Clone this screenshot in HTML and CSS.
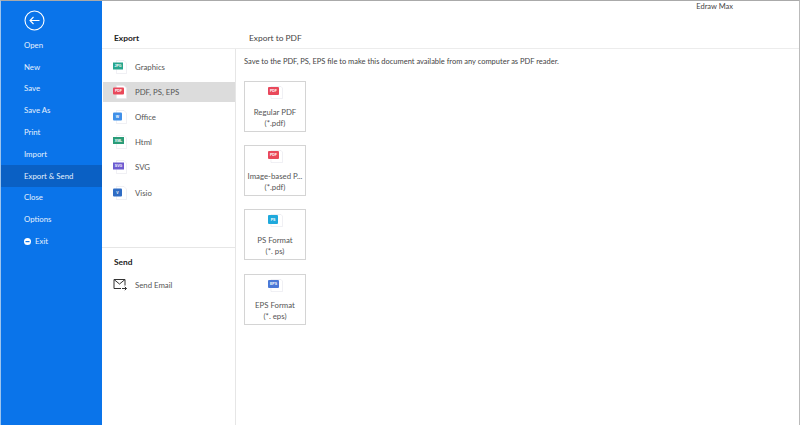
FILE: index.html
```html
<!DOCTYPE html>
<html lang="en">
<head>
<meta charset="utf-8">
<title>Export to PDF</title>
<link rel="stylesheet" href="styles.css">
</head>
<body>
<div class="app">
  <nav class="side">
    <svg class="back" width="21" height="21" viewBox="0 0 21 21"><circle cx="10.5" cy="10.5" r="9.5" fill="none" stroke="#fff" stroke-width="1.1"/><path d="M15.5 10.5H6M9.5 7L6 10.5L9.5 14" fill="none" stroke="#fff" stroke-width="1.1"/></svg>
    <a class="nav">Open</a>
    <a class="nav">New</a>
    <a class="nav">Save</a>
    <a class="nav">Save As</a>
    <a class="nav">Print</a>
    <a class="nav">Import</a>
    <a class="nav on">Export &amp; Send</a>
    <a class="nav">Close</a>
    <a class="nav">Options</a>
    <a class="nav exit"><svg width="7" height="7" viewBox="0 0 7 7"><circle cx="3.5" cy="3.5" r="3.5" fill="#fff"/><rect x="1.5" y="3" width="4" height="1.2" fill="#0a74ea"/></svg>Exit</a>
  </nav>
  <div class="main">
    <header class="top">
      <div class="brand">Edraw Max</div>
      <div class="heads">
        <h2 class="h-left">Export</h2>
        <h2 class="h-right">Export to PDF</h2>
      </div>
    </header>
    <div class="body">
      <aside class="mid">
        <div class="list">
          <div class="item"><svg class="ic" width="14" height="14" viewBox="0 0 14 14"><path class="pg" d="M3.5.5H11L13.5 3V13.500H3.500Z"/><rect x="0" y="2.500" width="10" height="7" fill="#27a68e"/><text class="bt" x="5" y="7.300">JPG</text></svg>Graphics</div>
          <div class="item sel"><svg class="ic" width="14" height="14" viewBox="0 0 14 14"><path class="pg" d="M3.500.5H11L13.500 3V13.500H3.500Z"/><rect x="0" y="2.500" width="11" height="7" rx="1" fill="#e9485a"/><text class="bt" x="5.500" y="7.300">PDF</text></svg>PDF, PS, EPS</div>
          <div class="item"><svg class="ic" width="14" height="14" viewBox="0 0 14 14"><path class="pg" d="M3.500.5H11L13.500 3V13.500H3.500Z"/><rect x="0" y="2.500" width="9" height="8" rx="1" fill="#3f8fe8"/><text class="bt" x="4.500" y="8">W</text></svg>Office</div>
          <div class="item"><svg class="ic" width="14" height="14" viewBox="0 0 14 14"><path class="pg" d="M3.500.5H11L13.500 3V13.500H3.500Z"/><rect x="0" y="2" width="11" height="7" fill="#2a9c78"/><text class="bt" x="5.500" y="6.800">XML</text></svg>Html</div>
          <div class="item"><svg class="ic" width="14" height="14" viewBox="0 0 14 14"><path class="pg" d="M3.500.5H11L13.500 3V13.500H3.500Z"/><rect x="0" y="2.500" width="11" height="7" fill="#6d5bd0"/><text class="bt" x="5.500" y="7.300">SVG</text></svg>SVG</div>
          <div class="item"><svg class="ic" width="14" height="14" viewBox="0 0 14 14"><path class="pg" d="M3.500.5H11L13.500 3V13.500H3.500Z"/><rect x="0" y="2.500" width="9" height="8" rx="1" fill="#2f6cc4"/><text class="bt" x="4.500" y="8">V</text></svg>Visio</div>
        </div>
        <div class="send">
          <h3 class="send-h">Send</h3>
          <div class="item mail"><svg class="ic" width="14" height="14" viewBox="0 0 14 14"><path d="M12 7.500V1.500H1V10.500H8M1 1.500L6.500 6L12 1.500M9 10.500H13.500M11.800 8.800L13.500 10.500L11.800 12.200" fill="none" stroke="#333" stroke-width="1"/></svg>Send Email</div>
        </div>
      </aside>
      <section class="content">
        <p class="desc">Save to the PDF, PS, EPS file to make this document available from any computer as PDF reader.</p>
        <div class="cards">
          <div class="card"><svg class="cic" width="16" height="13" viewBox="0 0 16 13"><path class="pg" d="M4 .5H14L15.500 2V12.500H4Z"/><rect x="1" y="1" width="11" height="8" rx="1" fill="#e9485a"/><text class="bt" x="6.500" y="6.300">PDF</text></svg><span>Regular PDF</span><span>(*.pdf)</span></div>
          <div class="card"><svg class="cic" width="16" height="13" viewBox="0 0 16 13"><path class="pg" d="M4 .5H14L15.500 2V12.500H4Z"/><rect x="1" y="1" width="11" height="8" rx="1" fill="#e9485a"/><text class="bt" x="6.500" y="6.300">PDF</text></svg><span>Image-based P...</span><span>(*.pdf)</span></div>
          <div class="card"><svg class="cic" width="16" height="13" viewBox="0 0 16 13"><path class="pg" d="M4 .5H14L15.500 2V12.500H4Z"/><rect x="1" y="1" width="10" height="9" rx="1" fill="#1fa9dc"/><text class="bt" x="6" y="6.800">PS</text></svg><span>PS Format</span><span>(*. ps)</span></div>
          <div class="card"><svg class="cic" width="16" height="13" viewBox="0 0 16 13"><path class="pg" d="M4 .5H14L15.500 2V12.500H4Z"/><rect x="1" y="1" width="11" height="8" rx="1" fill="#4a78d6"/><text class="bt" x="6.500" y="6.300">EPS</text></svg><span>EPS Format</span><span>(*. eps)</span></div>
        </div>
      </section>
    </div>
  </div>
</div>
</body>
</html>
```
FILE: styles.css
```css
* { box-sizing: border-box; }
html, body { margin: 0; height: 100%; }
body { font-family: "Lato", "Open Sans", sans-serif; font-size: 7.800px; color: #555; background: #fff; overflow: hidden; }
.app { display: flex; width: 800px; height: 425px; border-top: 1px solid #aaa; border-right: 1px solid #bbb; border-left: 1px solid #9cc4ee; }
.side { flex: 0 0 101px; background: #0a74ea; display: flex; flex-direction: column; padding-top: 9px; color: #e4f0fd; }
.back { margin: 0 0 3px 23px; display: block; }
.nav { display: flex; align-items: center; height: 21.800px; padding-left: 23px; }
.nav.on { background: #0a60c4; }
.exit { gap: 4px; }
.main { flex: 1; display: flex; flex-direction: column; min-width: 0; }
.top { height: 48px; border-bottom: 1px solid #ececec; display: flex; flex-direction: column; }
.brand { align-self: flex-end; margin: 0 66px 0 0; font-size: 7.500px; color: #444; line-height: 12px; }
.heads { display: flex; margin-top: 18px; align-items: center; }
h2 { margin: 0; font-size: 8.400px; line-height: 14px; }
.h-left { width: 147px; padding-left: 12px; font-weight: 700; color: #222; }
.h-right { font-weight: 400; color: #444; }
.body { flex: 1; display: flex; min-height: 0; }
.mid { flex: 0 0 134px; border-right: 1px solid #e6e6e6; display: flex; flex-direction: column; padding-top: 5px; }
.list { height: 193px; display: flex; flex-direction: column; margin-left: 1px; }
.item { display: flex; align-items: center; height: 25.200px; padding-left: 10px; gap: 8px; color: #555; }
.ic { flex: none; }
.sel { background: #dcdcdc; height: 20px; margin: 2.600px 0; }
.send { border-top: 1px solid #e6e6e6; padding-top: 8px; }
.send-h { margin: 0 0 3px; padding-left: 12px; font-size: 8.400px; line-height: 13px; color: #222; font-weight: 700; }
.mail { padding-left: 11px; }
.content { flex: 1; padding: 6px 0 0 8px; }
.desc { margin: 0 0 12px; font-size: 7.500px; line-height: 14px; color: #444; }
.cards { display: flex; flex-direction: column; gap: 13.200px; }
.card { width: 62px; height: 51px; border: 1px solid #d4d4d4; display: flex; flex-direction: column; align-items: center; padding-top: 4px; line-height: 11px; color: #555; white-space: nowrap; }
.cic { margin-bottom: 8px; flex: none; }
.pg { fill: #fff; stroke: #e6e6ec; stroke-width: .6; }
.bt { font-size: 3.500px; font-weight: 700; fill: #fff; text-anchor: middle; font-family: "Liberation Sans", sans-serif; }
```
